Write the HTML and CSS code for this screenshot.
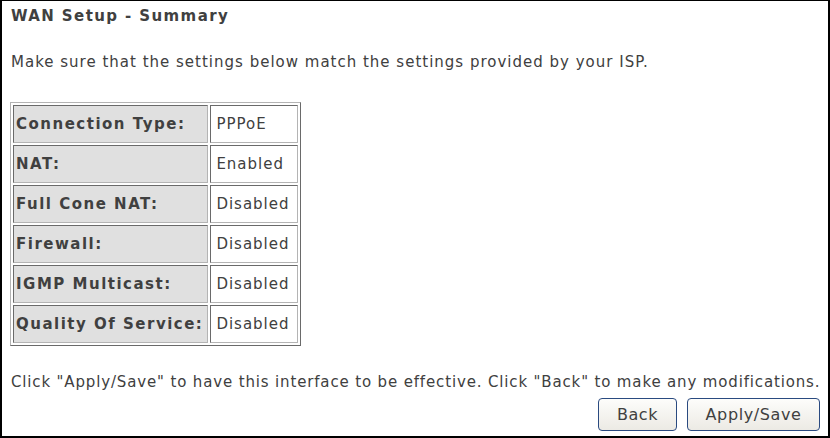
FILE: index.html
```html
<!DOCTYPE html>
<html lang="en">
<head>
  <meta charset="UTF-8" />
  <title>WAN Setup - Summary</title>
  <link rel="stylesheet" href="styles.css">
</head>
<body>
  <div class="frame">
    <div class="title">WAN Setup - Summary</div>
    <p class="intro">Make sure that the settings below match the settings provided by your ISP.</p>
    <table class="summary">
      <tr><td class="label">Connection Type:</td><td class="value">PPPoE</td></tr>
      <tr><td class="label">NAT:</td><td class="value">Enabled</td></tr>
      <tr><td class="label">Full Cone NAT:</td><td class="value">Disabled</td></tr>
      <tr><td class="label">Firewall:</td><td class="value">Disabled</td></tr>
      <tr><td class="label">IGMP Multicast:</td><td class="value">Disabled</td></tr>
      <tr><td class="label">Quality Of Service:</td><td class="value">Disabled</td></tr>
    </table>
    <p class="note">Click "Apply/Save" to have this interface to be effective. Click "Back" to make any modifications.</p>
    <div class="buttons">
      <button class="btn btn-back">Back</button>
      <button class="btn btn-save">Apply/Save</button>
    </div>
  </div>
</body>
</html>
```

FILE: styles.css
```css
html, body {
  margin: 0;
  padding: 0;
  background: #fff;
}

body {
  font-family: "DejaVu Sans", Verdana, sans-serif;
  font-size: 15px;
  letter-spacing: 1px;
  color: #404040;
}

.frame {
  box-sizing: border-box;
  width: 830px;
  height: 438px;
  border-style: solid;
  border-color: #000;
  border-width: 1px 2px 2px 2px;
  padding: 3px 0 0 9px;
  overflow: hidden;
  white-space: nowrap;
}

.title {
  font-weight: bold;
  letter-spacing: 1.4px;
  height: 24px;
  line-height: 24px;
}

.intro {
  margin: 22px 0 0 0;
  line-height: 24px;
}

.summary {
  margin: 28px 0 0 -1px;
  border-collapse: separate;
  border-spacing: 2px;
  border: 1px solid;
  border-color: #b4b4b4 #6a6a6a #6a6a6a #b4b4b4;
}

.summary td {
  height: 36px;
  padding: 0;
  border: 1px solid;
  border-color: #6a6a6a #b4b4b4 #b4b4b4 #6a6a6a;
}

.summary .label {
  width: 185px;
  padding: 0 4px 0 2px;
  background: #e0e0e0;
  font-weight: bold;
  letter-spacing: 1.5px;
}

.summary .value {
  width: 78px;
  padding: 0 3px 0 5px;
  background: #fff;
}

.note {
  margin: 24px 0 0 0;
  line-height: 24px;
  letter-spacing: 0.85px;
}

.buttons {
  display: flex;
  justify-content: flex-end;
  gap: 10px;
  margin: 4px 8px 0 0;
}

.btn {
  font-family: inherit;
  font-size: 16px;
  letter-spacing: 0.6px;
  color: #404040;
  height: 33px;
  background: linear-gradient(#fdfdfb, #eceae4);
  border: 1px solid #2a4a80;
  border-radius: 4px;
  padding: 0;
}

.btn-back {
  width: 79px;
}

.btn-save {
  width: 133px;
}
```
